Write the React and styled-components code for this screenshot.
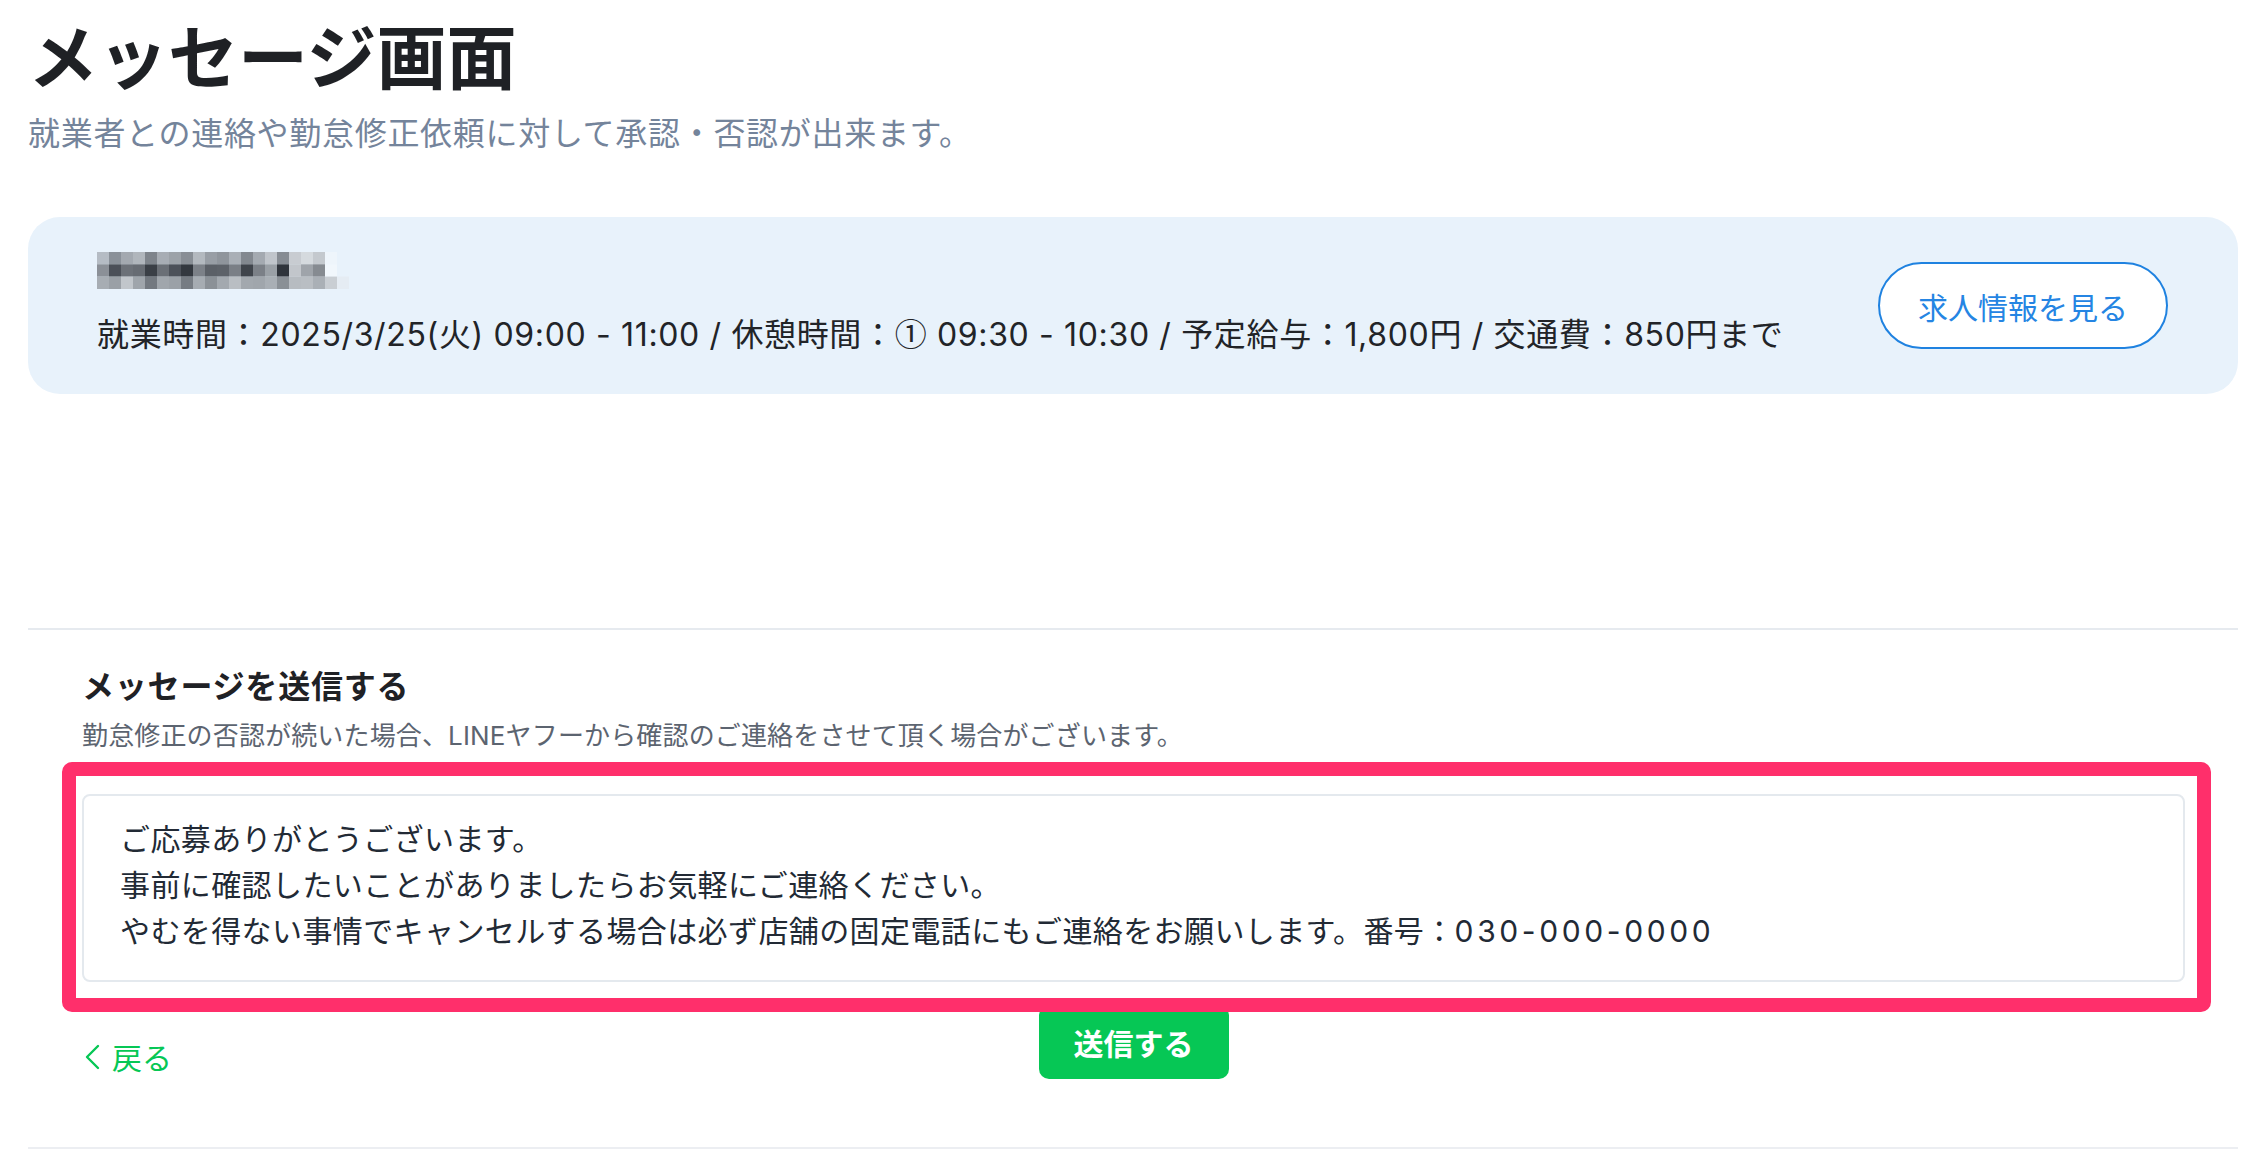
import React from "react";
import styled, { createGlobalStyle } from "styled-components";

const GlobalStyle = createGlobalStyle`
  html, body { margin: 0; padding: 0; background: #ffffff; }
  body {
    font-family: "Inter", "Noto Sans CJK JP", "Noto Sans", sans-serif;
    color: #1f2125;
  }
  * { box-sizing: border-box; }
`;

const Page = styled.main`
  width: 2258px;
  min-height: 1150px;
  padding: 12px 20px 0 28px;
  display: flex;
  flex-direction: column;
`;

const Header = styled.header`
  display: flex;
  flex-direction: column;
  gap: 14px;
`;

const Title = styled.h1`
  margin: 0;
  font-family: "Noto Sans CJK JP", sans-serif;
  font-size: 70px;
  line-height: 84px;
  font-weight: 700;
  color: #1f2125;
`;

const Subtitle = styled.p`
  margin: 0;
  font-size: 32px;
  line-height: 48px;
  letter-spacing: 0.7px;
  color: #74849b;
`;

const JobCard = styled.section`
  margin-top: 59px;
  background: #e8f2fb;
  border-radius: 32px;
  padding: 35px 70px 35px 69px;
  display: flex;
  align-items: center;
  justify-content: space-between;
`;

const JobInfo = styled.div`
  display: flex;
  flex-direction: column;
  gap: 22px;
`;

const Mosaic = styled.svg`
  display: block;
`;

const WorkLine = styled.p`
  margin: 0;
  height: 48px;
  font-size: 32px;
  line-height: 48px;
  letter-spacing: 0.65px;
  color: #222428;
  white-space: nowrap;
`;

const Circled = styled.span`
  font-family: "Noto Sans CJK JP", sans-serif;
  line-height: 1;
`;

const OutlineButton = styled.button`
  height: 87px;
  padding: 0 38px;
  border: 2px solid #1f82e0;
  border-radius: 44px;
  background: #ffffff;
  color: #2585e3;
  font-family: "Noto Sans CJK JP", sans-serif;
  font-size: 30px;
  line-height: 1;
  cursor: pointer;
`;

const MessageSection = styled.section`
  margin-top: 234px;
  border-top: 2px solid #e6eaef;
  border-bottom: 2px solid #eceef2;
  padding: 33px 53px 68px 54px;
  display: flex;
  flex-direction: column;
`;

const SectionTitle = styled.h2`
  margin: 0;
  font-size: 32px;
  line-height: 48px;
  letter-spacing: 0.8px;
  font-weight: 700;
  color: #1f2125;
`;

const Note = styled.p`
  margin: 5px 0 0;
  font-size: 26px;
  line-height: 39px;
  letter-spacing: 0.15px;
  color: #5c6470;
`;

const FieldWrap = styled.div`
  position: relative;
  margin-top: 39px;

  &::after {
    content: "";
    position: absolute;
    top: -32px;
    left: -20px;
    right: -26px;
    bottom: -30px;
    border: 14px solid #ff2f6b;
    border-radius: 10px;
    pointer-events: none;
    z-index: 2;
  }
`;

const MessageBox = styled.div`
  height: 188px;
  border: 2px solid #e4e9ee;
  border-radius: 8px;
  padding: 20px 36px 26px;
  font-size: 30px;
  line-height: 46px;
  letter-spacing: 0.4px;
  color: #222a35;
  white-space: pre-wrap;
  background: #ffffff;
`;

const PhoneNumber = styled.span`
  letter-spacing: 3.6px;
`;

const Footer = styled.div`
  margin-top: 23px;
  display: grid;
  grid-template-columns: 1fr auto 1fr;
  align-items: end;
`;

const BackLink = styled.a`
  justify-self: start;
  display: inline-flex;
  align-items: center;
  gap: 8px;
  color: #06c755;
  font-family: "Noto Sans CJK JP", sans-serif;
  font-size: 30px;
  line-height: 45px;
  text-decoration: none;
  cursor: pointer;
`;

const SubmitButton = styled.button`
  height: 74px;
  padding: 0 35px;
  border: none;
  border-radius: 10px;
  background: #06c755;
  color: #ffffff;
  font-family: "Noto Sans CJK JP", sans-serif;
  font-size: 30px;
  font-weight: 700;
  line-height: 1;
  cursor: pointer;
`;

const mosaicRows = [
  ["#b5bcc4", "#8a9199", "#a3a9b0", "#b0b6bc", "#7e848b", "#a7adb4", "#9ca2a8", "#888e95", "#b3b9bf", "#989ea5", "#8f959c", "#a9afb6", "#82888f", "#a4aab1", "#c0c5cb", "#868c93", "#c8ccd1", "#d5dade", "#c4c9ce", "#eef5fb", "#e8f2fb"],
  ["#8b9097", "#4b5058", "#6c7178", "#676c73", "#3a3f46", "#6a6f76", "#4c5159", "#33383f", "#7c8188", "#5b6067", "#5d6269", "#7a7f86", "#3f444b", "#7b8087", "#9aa0a6", "#2f343b", "#c2c6cb", "#9fa4aa", "#868b91", "#f1f7fc", "#e8f2fb"],
  ["#a7adb3", "#9aa0a6", "#c1c6cb", "#9fa5ab", "#737980", "#a0a6ac", "#9ba1a7", "#767c83", "#a6acb2", "#8b9197", "#a3a9af", "#b9bec3", "#a2a8ae", "#a0a6ac", "#a9afb5", "#8a9096", "#b7bcc1", "#b9bec3", "#aab0b6", "#c9ced3", "#e5ecf3"],
];

function NameMosaic() {
  const cell = 12;
  return (
    <Mosaic width={252} height={37} viewBox="0 0 252 37" aria-label="氏名（モザイク）">
      {mosaicRows.map((row, r) =>
        row.map((c, i) => (
          <rect key={`${r}-${i}`} x={i * cell} y={r * 12.3} width={cell} height={12.4} fill={c} />
        ))
      )}
    </Mosaic>
  );
}

function ChevronLeft() {
  return (
    <svg width="22" height="30" viewBox="0 0 22 30" aria-hidden="true">
      <path d="M16 4 L5 15 L16 26" fill="none" stroke="#06c755" strokeWidth="2.4" strokeLinecap="round" strokeLinejoin="round" />
    </svg>
  );
}

export default function App() {
  return (
    <>
      <GlobalStyle />
      <Page>
        <Header>
          <Title>メッセージ画面</Title>
          <Subtitle>就業者との連絡や勤怠修正依頼に対して承認・否認が出来ます。</Subtitle>
        </Header>

        <JobCard>
          <JobInfo>
            <NameMosaic />
            <WorkLine>
              就業時間：2025/3/25(火) 09:00 - 11:00 / 休憩時間：<Circled>①</Circled> 09:30 - 10:30 / 予定給与：1,800円 / 交通費：850円まで
            </WorkLine>
          </JobInfo>
          <OutlineButton type="button">求人情報を見る</OutlineButton>
        </JobCard>

        <MessageSection>
          <SectionTitle>メッセージを送信する</SectionTitle>
          <Note>勤怠修正の否認が続いた場合、LINEヤフーから確認のご連絡をさせて頂く場合がございます。</Note>
          <FieldWrap>
            <MessageBox role="textbox" aria-multiline="true">
              {"ご応募ありがとうございます。\n事前に確認したいことがありましたらお気軽にご連絡ください。\nやむを得ない事情でキャンセルする場合は必ず店舗の固定電話にもご連絡をお願いします。番号："}
              <PhoneNumber>030-000-0000</PhoneNumber>
            </MessageBox>
          </FieldWrap>
          <Footer>
            <BackLink>
              <ChevronLeft />
              戻る
            </BackLink>
            <SubmitButton type="button">送信する</SubmitButton>
            <span />
          </Footer>
        </MessageSection>
      </Page>
    </>
  );
}
